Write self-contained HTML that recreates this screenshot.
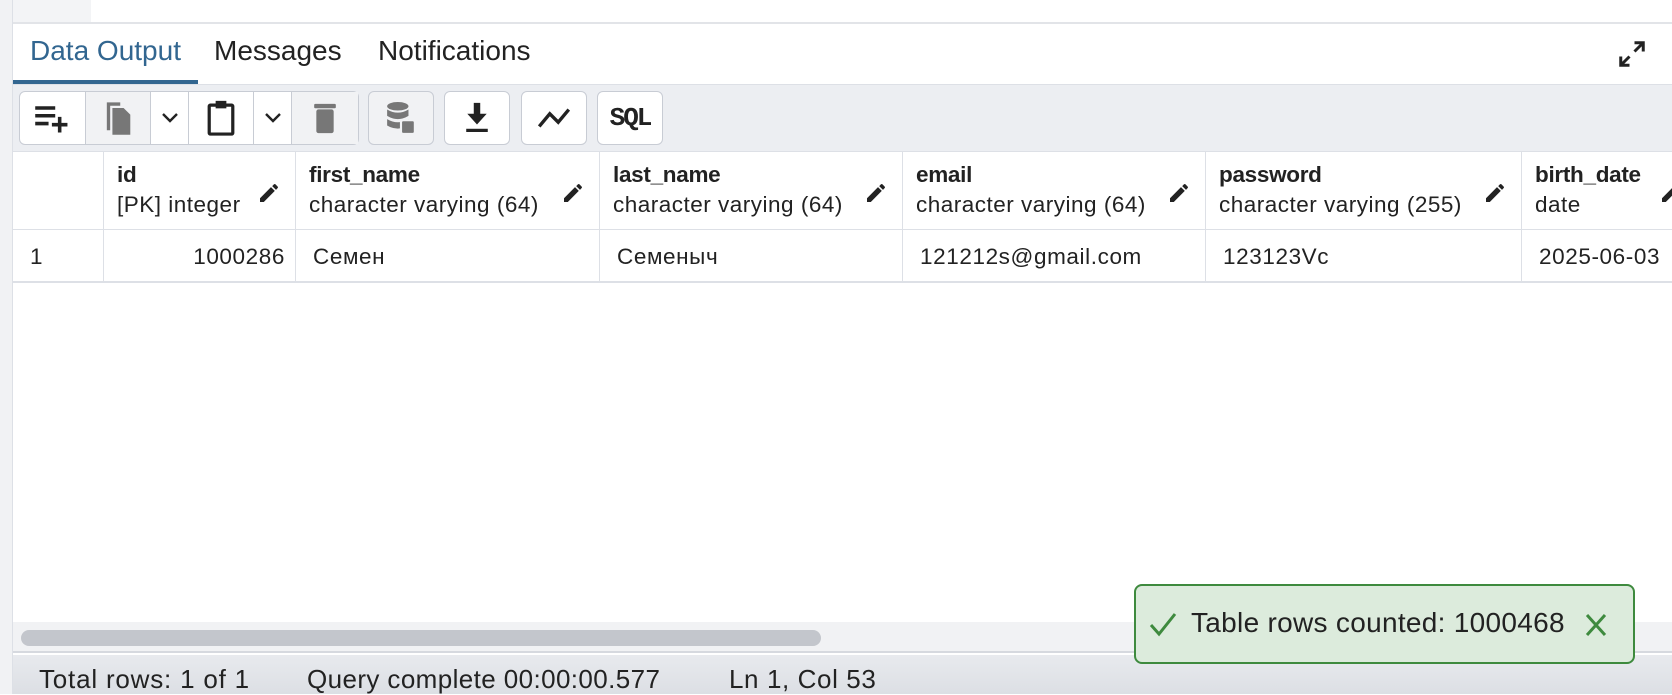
<!DOCTYPE html>
<html><head><meta charset="utf-8"><style>
*{box-sizing:border-box;margin:0;padding:0}
body{width:1672px;height:694px;overflow:hidden;background:#fff;font-family:"Liberation Sans","Noto Sans CJK SC",sans-serif;color:#222;position:relative}
.abs{position:absolute}
.btn{position:absolute;top:91px;height:54px;border:1px solid #c8ccd4;border-radius:6px;background:#fff;display:flex}
.btn div{display:flex;align-items:center;justify-content:center;border-right:1px solid #c8ccd4;height:100%}
.btn div:last-child{border-right:none}
.col{position:absolute;top:151px;height:130px;border-left:1px solid #dde0e6}
.hname{position:absolute;top:11px;font-weight:bold;font-size:22.5px;letter-spacing:-0.3px}
.htype{position:absolute;top:41px;font-size:22.5px;white-space:nowrap;letter-spacing:0.5px}
.cell{position:absolute;top:93px;font-size:22.5px;white-space:nowrap;letter-spacing:0.6px}
.pen{position:absolute;top:30px}
</style></head><body>
<div class="abs" style="left:0;top:0;width:13px;height:694px;background:#f1f2f4;border-right:1px solid #dde0e6"></div>
<div class="abs" style="left:13px;top:0;width:78px;height:23px;background:#f3f4f6"></div>
<div class="abs" style="left:13px;top:22px;width:1659px;height:2px;background:#e2e4e8"></div>
<div class="abs" style="left:30px;top:35px;font-size:28px;color:#326690">Data Output</div>
<div class="abs" style="left:214px;top:35px;font-size:28px;color:#222">Messages</div>
<div class="abs" style="left:378px;top:35px;font-size:28px;color:#222">Notifications</div>
<div class="abs" style="left:13px;top:80px;width:185px;height:4px;background:#326690"></div>
<svg class="abs" style="left:1617px;top:39px" width="30" height="30" viewBox="0 0 24 24"><path d="M14 3h7v7M21 3l-7 7M10 21H3v-7M3 21l7-7" stroke="#222" stroke-width="2.4" fill="none"/></svg>
<div class="abs" style="left:13px;top:84px;width:1659px;height:67px;background:#eceef2;border-top:1px solid #dde0e6"></div>
<div class="btn" style="left:19px;width:340px">
<div style="width:66px"><svg width="40" height="34" viewBox="0 0 36 30"><path d="M2 6h18M2 13h18M2 20h12M24 14v14M17 21h14" stroke="#222" stroke-width="3.2" fill="none"/></svg></div>
<div style="width:65px;background:#f1f2f4"><svg width="30" height="38" viewBox="0 0 26 34"><path d="M3 3h12v3H6v22H3z" fill="#777"/><path d="M8 8h10l6 6v18H8z" fill="#777"/></svg></div>
<div style="width:38px;background:#fff"><svg width="18" height="12"><path d="M2 2l7 7 7-7" stroke="#222" stroke-width="2.4" fill="none"/></svg></div>
<div style="width:65px"><svg width="30" height="40" viewBox="0 0 28 36"><rect x="3" y="6" width="22" height="27" rx="1" stroke="#222" stroke-width="3" fill="none"/><rect x="9" y="2" width="10" height="7" fill="#222"/></svg></div>
<div style="width:38px"><svg width="18" height="12"><path d="M2 2l7 7 7-7" stroke="#222" stroke-width="2.4" fill="none"/></svg></div>
<div style="flex:1;background:#f1f2f4"><svg width="26" height="36" viewBox="0 0 24 32"><rect x="2" y="3" width="20" height="4" rx="1" fill="#777"/><rect x="4" y="8" width="16" height="22" rx="2" fill="#777"/></svg></div>
</div>
<div class="btn" style="left:368px;width:66px;background:#f1f2f4"><div style="width:100%"><svg width="32" height="38" viewBox="0 0 30 34"><ellipse cx="12" cy="6" rx="10" ry="4" fill="#777"/><path d="M2 9q10 6 20 0v6q-10 6-20 0zM2 18q10 6 20 0v6q-10 6-20 0z" fill="#777"/><rect x="15" y="19" width="13" height="13" rx="2" fill="#777" stroke="#f1f2f4" stroke-width="2"/></svg></div></div>
<div class="btn" style="left:444px;width:66px"><div style="width:100%"><svg width="28" height="36" viewBox="0 0 26 32"><path d="M10 2h6v10h6l-9 10-9-10h6z" fill="#222"/><rect x="3" y="26" width="20" height="3" fill="#222"/></svg></div></div>
<div class="btn" style="left:521px;width:66px"><div style="width:100%"><svg width="38" height="26" viewBox="0 0 36 24"><path d="M4 20l10-12 8 8 10-12" stroke="#222" stroke-width="3.2" fill="none"/></svg></div></div>
<div class="btn" style="left:597px;width:66px"><div style="width:100%;font-family:'Liberation Mono',monospace;font-weight:bold;font-size:26px;color:#222;letter-spacing:-2px">SQL</div></div>
<div class="abs" style="left:13px;top:151px;width:1659px;height:1px;background:#dde0e6"></div>
<div class="abs" style="left:13px;top:229px;width:1659px;height:1px;background:#dde0e6"></div>
<div class="abs" style="left:13px;top:281px;width:1659px;height:2px;background:#dde0e6"></div>
<div class="abs" style="left:30px;top:244px;font-size:22.5px">1</div>
<div class="col" style="left:103px;width:192px"><div class="hname" style="left:13px">id</div><div class="htype" style="left:13px">[PK] integer</div><div class="cell" style="right:10px">1000286</div><svg class="pen" style="left:153px" width="24" height="24" viewBox="0 0 24 24"><path d="M3 17.2V21h3.8L17.8 9.9l-3.8-3.8zM20.7 7a1 1 0 000-1.4l-2.3-2.3a1 1 0 00-1.4 0l-1.8 1.8 3.8 3.8z" fill="#222"/></svg></div>
<div class="col" style="left:295px;width:304px"><div class="hname" style="left:13px">first_name</div><div class="htype" style="left:13px">character varying (64)</div><div class="cell" style="left:17px">Семен</div><svg class="pen" style="left:265px" width="24" height="24" viewBox="0 0 24 24"><path d="M3 17.2V21h3.8L17.8 9.9l-3.8-3.8zM20.7 7a1 1 0 000-1.4l-2.3-2.3a1 1 0 00-1.4 0l-1.8 1.8 3.8 3.8z" fill="#222"/></svg></div>
<div class="col" style="left:599px;width:303px"><div class="hname" style="left:13px">last_name</div><div class="htype" style="left:13px">character varying (64)</div><div class="cell" style="left:17px">Семеныч</div><svg class="pen" style="left:264px" width="24" height="24" viewBox="0 0 24 24"><path d="M3 17.2V21h3.8L17.8 9.9l-3.8-3.8zM20.7 7a1 1 0 000-1.4l-2.3-2.3a1 1 0 00-1.4 0l-1.8 1.8 3.8 3.8z" fill="#222"/></svg></div>
<div class="col" style="left:902px;width:303px"><div class="hname" style="left:13px">email</div><div class="htype" style="left:13px">character varying (64)</div><div class="cell" style="left:17px">121212s@gmail.com</div><svg class="pen" style="left:264px" width="24" height="24" viewBox="0 0 24 24"><path d="M3 17.2V21h3.8L17.8 9.9l-3.8-3.8zM20.7 7a1 1 0 000-1.4l-2.3-2.3a1 1 0 00-1.4 0l-1.8 1.8 3.8 3.8z" fill="#222"/></svg></div>
<div class="col" style="left:1205px;width:316px"><div class="hname" style="left:13px">password</div><div class="htype" style="left:13px">character varying (255)</div><div class="cell" style="left:17px">123123Vc</div><svg class="pen" style="left:277px" width="24" height="24" viewBox="0 0 24 24"><path d="M3 17.2V21h3.8L17.8 9.9l-3.8-3.8zM20.7 7a1 1 0 000-1.4l-2.3-2.3a1 1 0 00-1.4 0l-1.8 1.8 3.8 3.8z" fill="#222"/></svg></div>
<div class="col" style="left:1521px;width:151px;overflow:hidden"><div class="hname" style="left:13px">birth_date</div><div class="htype" style="left:13px">date</div><div class="cell" style="left:17px">2025-06-03</div><svg class="pen" style="left:137px" width="24" height="24" viewBox="0 0 24 24"><path d="M3 17.2V21h3.8L17.8 9.9l-3.8-3.8zM20.7 7a1 1 0 000-1.4l-2.3-2.3a1 1 0 00-1.4 0l-1.8 1.8 3.8 3.8z" fill="#222"/></svg></div>
<div class="abs" style="left:13px;top:622px;width:1659px;height:31px;background:#f1f2f4;border-bottom:2px solid #d6d9df"></div>
<div class="abs" style="left:21px;top:630px;width:800px;height:16px;border-radius:8px;background:#c3c6cc"></div>
<div class="abs" style="left:13px;top:655px;width:1659px;height:39px;background:linear-gradient(#e8eaee,#dcdfe4)"></div>
<div class="abs" style="left:39px;top:664px;font-size:26px;color:#222;letter-spacing:0.8px">Total rows: 1 of 1</div>
<div class="abs" style="left:307px;top:664px;font-size:26px;color:#222;letter-spacing:0.4px">Query complete 00:00:00.577</div>
<div class="abs" style="left:729px;top:664px;font-size:26px;color:#222;letter-spacing:0.6px">Ln 1, Col 53</div>
<div class="abs" style="left:1134px;top:584px;width:501px;height:80px;border:2px solid #3e8a3e;border-radius:8px;background:#dcebdc"></div>
<svg class="abs" style="left:1148px;top:611px" width="30" height="26" viewBox="0 0 30 26"><path d="M3 14l8 9L27 3" stroke="#3e8a3e" stroke-width="3" fill="none"/></svg>
<div class="abs" style="left:1191px;top:607px;font-size:28px;color:#222;letter-spacing:0.3px">Table rows counted: 1000468</div>
<svg class="abs" style="left:1584px;top:612px" width="24" height="26" viewBox="0 0 24 26"><path d="M3 3l18 20M21 3L3 23" stroke="#3e8a3e" stroke-width="3" fill="none"/></svg>
</body></html>
